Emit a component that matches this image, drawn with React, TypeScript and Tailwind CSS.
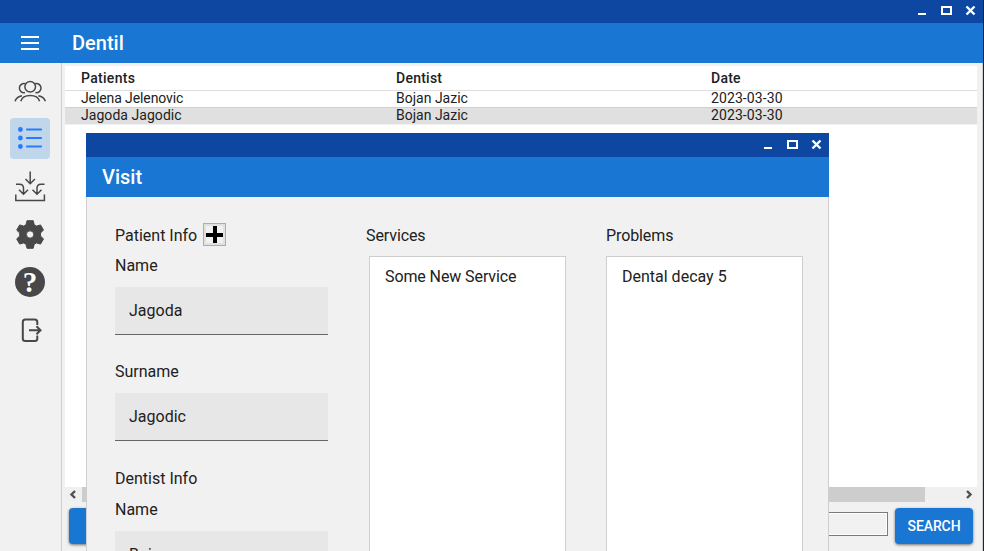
import type { ReactNode } from "react";

function WindowControls() {
  return (
    <svg width="62" height="23" viewBox="0 0 62 23" fill="none" stroke="#fff" strokeWidth="2">
      <path d="M1 14h8" />
      <path d="M25 7h9v7h-9z" />
      <path d="M49.5 6.5l8 8M57.5 6.5l-8 8" strokeWidth="2.4" />
    </svg>
  );
}

function NavItem({ children, active }: { children: ReactNode; active?: boolean }) {
  return (
    <div className="flex h-12 justify-center">
      <div className={active ? "mt-[3px] h-[41px] w-10 rounded-[4px] bg-[#bfd6eb]" : "mt-[3px] h-[41px] w-10"}>
        <svg width="40" height="41" viewBox="0 0 40 41" fill="none" stroke="#484848" strokeWidth="1.5" className="overflow-visible">
          {children}
        </svg>
      </div>
    </div>
  );
}

function Sidebar() {
  return (
    <nav className="w-[62px] shrink-0 border-r border-[#cfcfcf] bg-[#f1f1f1] pt-1 pr-px">
      <NavItem>
        <circle cx="20.2" cy="16.8" r="5.3" />
        <path d="M15.6 13.8A4.6 4.6 0 1 0 15 22.6M24.8 13.8A4.6 4.6 0 1 1 25.4 22.6" />
        <path d="M10.8 31.2c1-3.2 4.4-5.6 9.4-5.6s8.4 2.4 9.4 5.6M5 31.2c.9-2.6 3.2-4.7 7-5.5M35.4 31.2c-.9-2.6-3.2-4.7-7-5.5" />
      </NavItem>
      <NavItem active>
        <g stroke="#2b7afb" strokeWidth="2.2" strokeLinecap="round">
          <path d="M17 11.5h14M17 20h14M17 28.5h14" />
        </g>
        <g fill="#2b7afb" stroke="none">
          <circle cx="10.4" cy="11.5" r="2.4" />
          <circle cx="10.4" cy="20" r="2.4" />
          <circle cx="10.4" cy="28.5" r="2.4" />
        </g>
      </NavItem>
      <NavItem>
        <path d="M20.2 5.5V17.5M15.5 13l4.7 4.7 4.7-4.7" />
        <path d="M6 18.2h3.5q4 0 4 4v6M9 23.7l4.5 4.5 4.5-4.5M34.5 18.2h-3.5q-4 0-4 4v6M22.5 23.7l4.5 4.5 4.5-4.5" />
        <path d="M5.8 28.5v6h28.6v-6" />
      </NavItem>
      <NavItem>
        <path
          fill="#484848"
          stroke="#484848"
          strokeWidth="1"
          strokeLinejoin="round"
          fillRule="evenodd"
          d="M17 6.7h6.2l1 4.1 2.3 1.3 4-1.2 3 5.2-3 2.9v3l3 2.9-3 5.2-4-1.2-2.3 1.3-1 4.1H17l-1-4.1-2.3-1.3-4 1.2-3-5.2 3-2.9v-3l-3-2.9 3-5.2 4 1.2 2.3-1.3zM20.1 16.8a3.7 3.7 0 1 0 0 7.4 3.7 3.7 0 0 0 0-7.4z"
        />
      </NavItem>
      <NavItem>
        <circle cx="20" cy="20" r="15" fill="#484848" stroke="none" />
        <text x="20" y="29.6" textAnchor="middle" fontSize="29" fontWeight="700" fill="#fff" stroke="none" className="font-['Liberation_Serif',serif]">
          ?
        </text>
      </NavItem>
      <NavItem>
        <path strokeWidth="2" d="M27.3 15v-3q0-2.5-2.5-2.5H15.3q-2.5 0-2.5 2.5V28.5q0 2.5 2.5 2.5h9.5q2.5 0 2.5-2.5v-3" />
        <path strokeWidth="2" d="M19 20.3h11M26.5 16.3l4 4-4 4" />
      </NavItem>
    </nav>
  );
}

function Field({ value }: { value: string }) {
  return <div className="h-12 w-[213px] border-b border-[#666] bg-[#e7e7e7] pt-3 pl-3.5 leading-[23px]">{value}</div>;
}

function VisitWindow() {
  return (
    <section className="absolute top-[133px] left-[86px] flex h-[418px] w-[743px] flex-col overflow-hidden bg-[#f1f1f1] text-[16px] leading-6">
      <div className="flex h-6 shrink-0 justify-end bg-[#0d47a1] pt-px pr-1">
        <WindowControls />
      </div>
      <h2 className="h-10 shrink-0 bg-[#1976d2] pl-4 text-[20px] leading-10 font-medium text-white">Visit</h2>
      <div className="flex flex-1 border-x border-[#cecece] pl-7">
        <div className="w-[251px]">
          <div className="mt-[26px] flex h-[31px]">
            <span className="pt-px">Patient Info</span>
            <button className="ml-1.5 flex size-[23px] items-center justify-center border border-[#adadad] bg-[#e1e1e1]">
              <svg width="17" height="17" viewBox="0 0 17 17">
                <rect width="17" height="17" fill="#f1f1f1" />
                <path d="M0 9h17M9 0v17" stroke="#000" strokeWidth="4" />
              </svg>
            </button>
          </div>
          <div className="h-[33px]">Name</div>
          <Field value="Jagoda" />
          <div className="mt-[25px] h-[33px]">Surname</div>
          <Field value="Jagodic" />
          <div className="mt-[26px] h-[31px]">Dentist Info</div>
          <div className="h-[33px]">Name</div>
          <Field value="Bojan" />
        </div>
        <div className="w-[240px] pt-[27px]">
          <div className="h-8 tracking-[-0.1px]">Services</div>
          <div className="ml-[3px] h-[320px] w-[197px] border border-[#cecece] bg-white pt-2 pl-[15px] tracking-[-0.1px]">Some New Service</div>
        </div>
        <div className="pt-[27px]">
          <div className="h-8 tracking-[-0.1px]">Problems</div>
          <div className="h-[320px] w-[197px] border border-[#cecece] bg-white pt-2 pl-[15px]">Dental decay 5</div>
        </div>
      </div>
    </section>
  );
}

function VisitTable() {
  return (
    <div className="h-[421px] bg-white text-[14px]">
      <div className="grid h-[25px] grid-cols-[315px_315px_1fr] border-b border-[#dedede] pl-4 leading-6 font-medium">
        <span className="tracking-[0.3px]">Patients</span>
        <span className="tracking-[0.25px]">Dentist</span>
        <span className="tracking-[0.25px]">Date</span>
      </div>
      <div className="grid h-4 grid-cols-[315px_315px_1fr] pl-4 leading-[14px]">
        <span className="tracking-[-0.1px]">Jelena Jelenovic</span>
        <span>Bojan Jazic</span>
        <span className="tracking-[0.1px]">2023-03-30</span>
      </div>
      <div className="grid h-[17px] grid-cols-[315px_315px_1fr] border-t border-[#cfcfcf] bg-[#e0e0e0] pl-4 leading-[14px]">
        <span className="tracking-[0.05px]">Jagoda Jagodic</span>
        <span>Bojan Jazic</span>
        <span className="tracking-[0.1px]">2023-03-30</span>
      </div>
      <div className="h-px bg-[#f0f0f0]" />
    </div>
  );
}

export default function App() {
  return (
    <div className="relative flex h-[551px] w-[984px] flex-col overflow-hidden border-r border-[#202427] bg-[#f1f1f1] font-['Roboto',sans-serif] text-[#212121]">
      <div className="flex h-[23px] shrink-0 justify-end bg-[#0d47a1] pr-1">
        <WindowControls />
      </div>
      <header className="flex h-10 shrink-0 items-center bg-[#1976d2] text-white">
        <svg width="18" height="14" viewBox="0 0 18 14" className="ml-[21px]" stroke="#fff" strokeWidth="2">
          <path d="M0 1h18M0 7h18M0 13h18" />
        </svg>
        <h1 className="ml-[33px] text-[20px] leading-10 font-medium">Dentil</h1>
      </header>
      <div className="flex flex-1">
        <Sidebar />
        <main className="flex-1 border-r border-[#cfcfcf] pt-[3px] pr-[5px] pl-[3px]">
          <VisitTable />
          <div className="flex h-[15px] items-center bg-[#f0f0f0]">
            <svg width="17" height="15" viewBox="0 0 17 15" fill="none" stroke="#505050" strokeWidth="2.4">
              <path d="M10 4L6.5 7.5 10 11" />
            </svg>
            <div className="h-full w-[843px] bg-[#cdcdcd]" />
            <svg width="17" height="15" viewBox="0 0 17 15" fill="none" stroke="#505050" strokeWidth="2.4" className="ml-auto">
              <path d="M7 4l3.5 3.5L7 11" />
            </svg>
          </div>
          <div className="flex justify-between pt-1.5 pr-1 pl-1">
            <button className="h-9 w-[78px] rounded-[4px] bg-[#1976d2] shadow-[0_1px_3px_#0008]" />
            <div className="flex">
              <div className="mt-1 mr-[7px] h-6 w-[200px] border border-[#7a7a7a] outline outline-1 -outline-offset-2 outline-white" />
              <button className="h-9 w-[78px] rounded-[4px] bg-[#1976d2] text-[14px] font-medium tracking-[-0.1px] text-white shadow-[0_1px_3px_#0008]">
                SEARCH
              </button>
            </div>
          </div>
        </main>
      </div>
      <VisitWindow />
    </div>
  );
}
